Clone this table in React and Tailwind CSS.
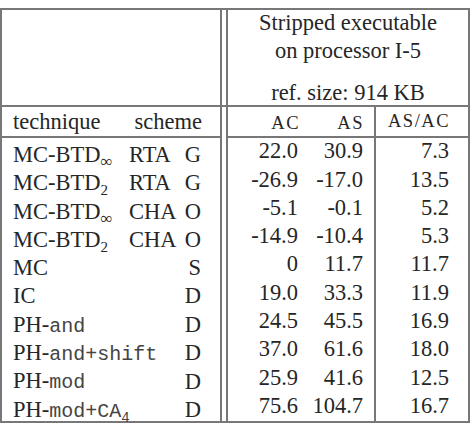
import React from 'react';

// Results table: sizes of the stripped executable on processor I-5
const rows = [
  { tech: <>MC-BTD<Sub className="text-[17px]">∞</Sub></>, scheme: 'RTA', kind: 'G', ac: '22.0', as: '30.9', ratio: '7.3' },
  { tech: <>MC-BTD<Sub>2</Sub></>, scheme: 'RTA', kind: 'G', ac: '-26.9', as: '-17.0', ratio: '13.5' },
  { tech: <>MC-BTD<Sub className="text-[17px]">∞</Sub></>, scheme: 'CHA', kind: 'O', ac: '-5.1', as: '-0.1', ratio: '5.2' },
  { tech: <>MC-BTD<Sub>2</Sub></>, scheme: 'CHA', kind: 'O', ac: '-14.9', as: '-10.4', ratio: '5.3' },
  { tech: 'MC', scheme: '', kind: 'S', ac: '0', as: '11.7', ratio: '11.7' },
  { tech: 'IC', scheme: '', kind: 'D', ac: '19.0', as: '33.3', ratio: '11.9' },
  { tech: <>PH-<Tt>and</Tt></>, scheme: '', kind: 'D', ac: '24.5', as: '45.5', ratio: '16.9' },
  { tech: <>PH-<Tt>and+shift</Tt></>, scheme: '', kind: 'D', ac: '37.0', as: '61.6', ratio: '18.0' },
  { tech: <>PH-<Tt>mod</Tt></>, scheme: '', kind: 'D', ac: '25.9', as: '41.6', ratio: '12.5' },
  { tech: <>PH-<Tt>mod+CA<Sub className="text-[14px]">4</Sub></Tt></>, scheme: '', kind: 'D', ac: '75.6', as: '104.7', ratio: '16.7' },
];

function Sub({ children, className = 'text-[15px]' }) {
  return <span className={`${className} leading-none align-[-5px]`}>{children}</span>;
}

function Tt({ children }) {
  return (
    <span className="font-[family-name:Liberation_Mono,Courier_New,monospace] text-[20px] text-[#444]">
      {children}
    </span>
  );
}

function Sc({ children }) {
  return <span className="text-[18.5px] tracking-[1.5px]">{children}</span>;
}

export default function App() {
  return (
    <div className="pt-[8px] bg-white">
      <div className="w-[470px] h-[415px] border-2 border-[#777] text-[#262626] text-[22.5px] font-[family-name:Liberation_Serif,Times_New_Roman,serif] flex flex-col">
        {/* top header */}
        <div className="flex h-[97px] border-b-2 border-[#777]">
          <div className="w-[220px] border-r-2 border-[#777]" />
          <div className="w-[4px]" />
          <div className="flex-1 border-l-2 border-[#777] flex flex-col items-center leading-[28px] -mt-[1.5px]">
            <div>Stripped executable</div>
            <div>on processor I-5</div>
            <div className="mt-[14.5px]">ref. size: 914 KB</div>
          </div>
        </div>

        <div className="flex flex-1">
          {/* technique / scheme */}
          <div className="w-[220px] border-r-2 border-[#777] flex flex-col">
            <div className="h-[31px] border-b-2 border-[#777] flex items-center justify-between pl-[11px] pr-[18px]">
              <span>technique</span>
              <span>scheme</span>
            </div>
            {rows.map((r, i) => (
              <div key={i} className="h-[28.3px] grid grid-cols-[116px_1fr_auto] items-center pl-[11px] pr-[19px] pb-[2px] whitespace-nowrap">
                <span>{r.tech}</span>
                <span>{r.scheme}</span>
                <span>{r.kind}</span>
              </div>
            ))}
          </div>

          <div className="w-[4px]" />

          {/* numbers */}
          <div className="flex-1 border-l-2 border-[#777] flex">
            <div className="w-[148px] border-r-2 border-[#777] flex flex-col">
              <div className="h-[31px] border-b-2 border-[#777] flex items-center pr-[10px]">
                <span className="w-[72px] text-right"><Sc>AC</Sc></span>
                <span className="flex-1 text-right"><Sc>AS</Sc></span>
              </div>
              {rows.map((r, i) => (
                <div key={i} className="h-[28.3px] flex items-center pr-[11px] pb-[2px]">
                  <span className="w-[70px] text-right">{r.ac}</span>
                  <span className="flex-1 text-right">{r.as}</span>
                </div>
              ))}
            </div>
            <div className="flex-1 flex flex-col">
              <div className="h-[31px] border-b-2 border-[#777] flex items-center justify-end pr-[18px]">
                <Sc>AS/AC</Sc>
              </div>
              {rows.map((r, i) => (
                <div key={i} className="h-[28.3px] flex items-center justify-end pr-[19px] pb-[2px]">
                  {r.ratio}
                </div>
              ))}
            </div>
          </div>
        </div>
      </div>
    </div>
  );
}
